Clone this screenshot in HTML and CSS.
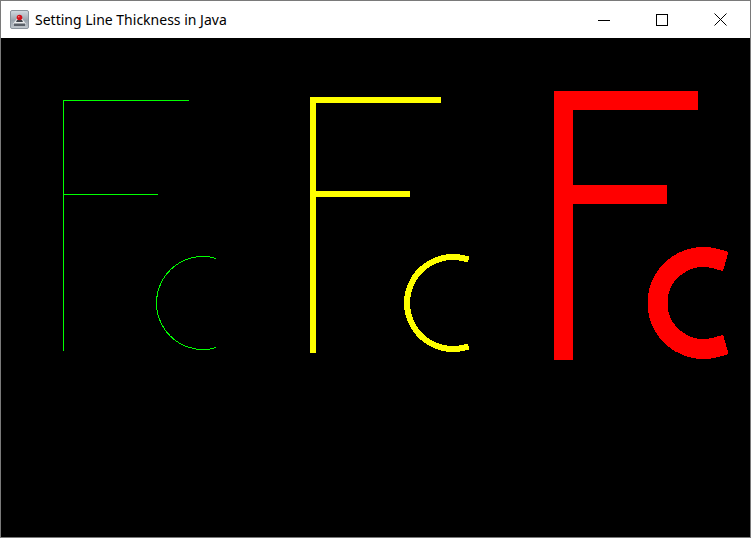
FILE: index.html
```html
<!DOCTYPE html>
<html>
<head>
<meta charset="utf-8">
<link rel="stylesheet" href="styles.css">
</head>
<body>
<div class="window">
  <div class="titlebar">
    <div class="app-icon">
      <svg width="19" height="19" viewBox="0 0 19 19">
        <defs>
          <linearGradient id="ig" x1="0" y1="0" x2="0" y2="1">
            <stop offset="0" stop-color="#d4dbe2"/>
            <stop offset="0.55" stop-color="#9aa3ac"/>
            <stop offset="1" stop-color="#c2c8ce"/>
          </linearGradient>
        </defs>
        <rect x="0.5" y="0.5" width="18" height="18" rx="1.5" fill="url(#ig)" stroke="#8a939c"/>
        <path d="M3 14 L9.5 5 L16 14 Z" fill="#e8eaec"/>
        <path d="M4 16 L15 16 L15 13.5 L4 13.5 Z" fill="#5a6068"/>
        <path d="M6 12 L13 12 L12 10 L7 10 Z" fill="#3d434a"/>
        <circle cx="9.5" cy="7.5" r="2.8" fill="#d0101a"/>
        <circle cx="8.8" cy="6.8" r="0.8" fill="#ff8a8a"/>
      </svg>
    </div>
    <div class="title">Setting Line Thickness in Java</div>
    <div class="controls">
      <div class="ctl">
        <svg width="12" height="12" viewBox="0 0 12 12" shape-rendering="crispEdges"><line x1="0" y1="6.5" x2="12" y2="6.5" stroke="#000" stroke-width="1"/></svg>
      </div>
      <div class="ctl">
        <svg width="12" height="12" viewBox="0 0 12 12" shape-rendering="crispEdges"><rect x="0.5" y="0.5" width="11" height="11" fill="none" stroke="#000" stroke-width="1"/></svg>
      </div>
      <div class="ctl">
        <svg width="13" height="13" viewBox="0 0 13 13"><path d="M0.5 0.5 L12.5 12.5 M12.5 0.5 L0.5 12.5" stroke="#000" stroke-width="1" fill="none"/></svg>
      </div>
    </div>
  </div>
  <div class="canvas">
    <svg class="drawing" width="749" height="499" viewBox="1 38 749 499" shape-rendering="crispEdges">
      <g stroke="#00ff00" stroke-width="1" fill="none" stroke-linecap="square">
        <line x1="63.5" y1="100.5" x2="63.5" y2="350.5"/>
        <line x1="63.5" y1="100.5" x2="188.5" y2="100.5"/>
        <line x1="63.5" y1="194.5" x2="157.5" y2="194.5"/>
        <path d="M215.82 258.30 A46.5 46.5 0 1 0 215.82 347.70"/>
      </g>
      <g stroke="#ffff00" stroke-width="6" fill="none" stroke-linecap="square">
        <line x1="313" y1="100" x2="313" y2="350"/>
        <line x1="313" y1="100" x2="438" y2="100"/>
        <line x1="313" y1="194" x2="407" y2="194"/>
        <path d="M465.68 258.78 A46 46 0 1 0 465.68 347.22"/>
      </g>
      <g stroke="#ff0000" stroke-width="19" fill="none" stroke-linecap="square">
        <line x1="563.5" y1="100.5" x2="563.5" y2="350"/>
        <line x1="563.5" y1="100.5" x2="688" y2="100.5"/>
        <line x1="563.5" y1="194.5" x2="657.5" y2="194.5"/>
      </g>
      <path d="M716.18 258.78 A46 46 0 1 0 716.18 347.22" stroke="#ff0000" stroke-width="20" fill="none" stroke-linecap="square"/>
    </svg>
  </div>
</div>
</body>
</html>
```

FILE: styles.css
```css
html, body {
  margin: 0;
  padding: 0;
  background: #000;
}

.window {
  width: 751px;
  height: 538px;
  box-sizing: border-box;
  border: 1px solid #7a7a7a;
  display: flex;
  flex-direction: column;
  overflow: hidden;
  background: #000;
}

.titlebar {
  height: 37px;
  flex: none;
  background: #ffffff;
  display: flex;
  align-items: center;
}

.app-icon {
  width: 19px;
  height: 19px;
  margin-left: 9px;
  margin-right: 6px;
  display: flex;
}

.title {
  font-family: "Segoe UI", "Noto Sans", "Liberation Sans", sans-serif;
  font-size: 14px;
  color: #000;
  flex: 1;
  white-space: nowrap;
}

.controls {
  display: flex;
  height: 37px;
  margin-right: 1px;
}

.ctl {
  width: 58px;
  height: 37px;
  display: flex;
  align-items: center;
  justify-content: center;
}

.canvas {
  flex: 1;
  background: #000;
  overflow: hidden;
}

.drawing {
  display: block;
}
```
